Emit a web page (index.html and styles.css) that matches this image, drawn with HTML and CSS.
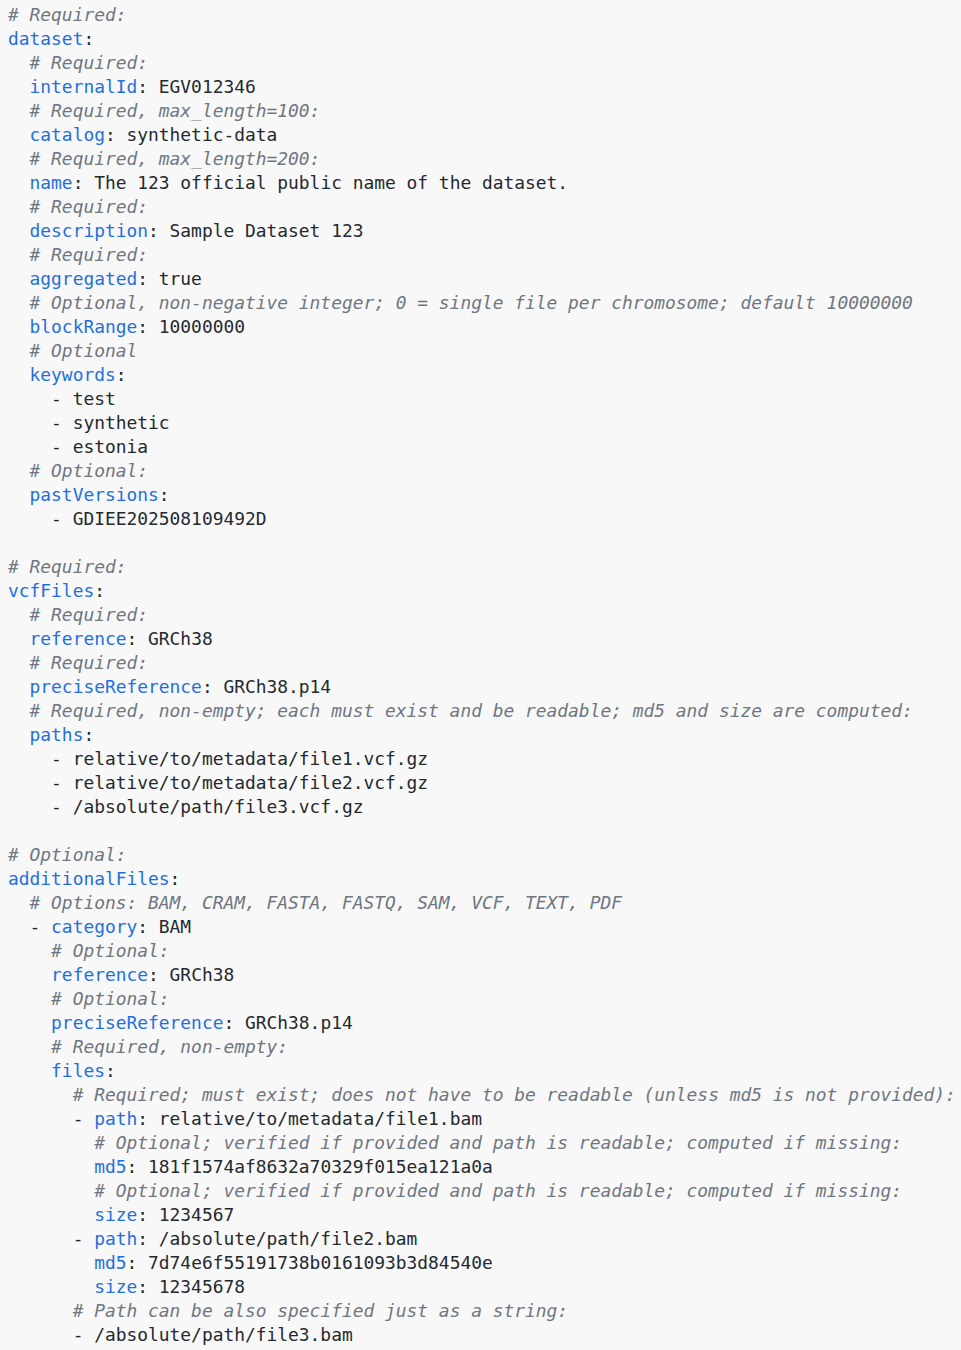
FILE: index.html
```html
<!DOCTYPE html>
<html>
<head>
<meta charset="utf-8">
<link rel="stylesheet" href="styles.css">
</head>
<body>
<pre class="code"><span class="c"># Required:</span>
<span class="k">dataset</span>:
  <span class="c"># Required:</span>
  <span class="k">internalId</span>: EGV012346
  <span class="c"># Required, max_length=100:</span>
  <span class="k">catalog</span>: synthetic-data
  <span class="c"># Required, max_length=200:</span>
  <span class="k">name</span>: The 123 official public name of the dataset.
  <span class="c"># Required:</span>
  <span class="k">description</span>: Sample Dataset 123
  <span class="c"># Required:</span>
  <span class="k">aggregated</span>: true
  <span class="c"># Optional, non-negative integer; 0 = single file per chromosome; default 10000000</span>
  <span class="k">blockRange</span>: 10000000
  <span class="c"># Optional</span>
  <span class="k">keywords</span>:
    - test
    - synthetic
    - estonia
  <span class="c"># Optional:</span>
  <span class="k">pastVersions</span>:
    - GDIEE202508109492D

<span class="c"># Required:</span>
<span class="k">vcfFiles</span>:
  <span class="c"># Required:</span>
  <span class="k">reference</span>: GRCh38
  <span class="c"># Required:</span>
  <span class="k">preciseReference</span>: GRCh38.p14
  <span class="c"># Required, non-empty; each must exist and be readable; md5 and size are computed:</span>
  <span class="k">paths</span>:
    - relative/to/metadata/file1.vcf.gz
    - relative/to/metadata/file2.vcf.gz
    - /absolute/path/file3.vcf.gz

<span class="c"># Optional:</span>
<span class="k">additionalFiles</span>:
  <span class="c"># Options: BAM, CRAM, FASTA, FASTQ, SAM, VCF, TEXT, PDF</span>
  - <span class="k">category</span>: BAM
    <span class="c"># Optional:</span>
    <span class="k">reference</span>: GRCh38
    <span class="c"># Optional:</span>
    <span class="k">preciseReference</span>: GRCh38.p14
    <span class="c"># Required, non-empty:</span>
    <span class="k">files</span>:
      <span class="c"># Required; must exist; does not have to be readable (unless md5 is not provided):</span>
      - <span class="k">path</span>: relative/to/metadata/file1.bam
        <span class="c"># Optional; verified if provided and path is readable; computed if missing:</span>
        <span class="k">md5</span>: 181f1574af8632a70329f015ea121a0a
        <span class="c"># Optional; verified if provided and path is readable; computed if missing:</span>
        <span class="k">size</span>: 1234567
      - <span class="k">path</span>: /absolute/path/file2.bam
        <span class="k">md5</span>: 7d74e6f55191738b0161093b3d84540e
        <span class="k">size</span>: 12345678
      <span class="c"># Path can be also specified just as a string:</span>
      - /absolute/path/file3.bam</pre>
</body>
</html>
```

FILE: styles.css
```css
html, body {
  margin: 0;
  padding: 0;
  background: #f8f8f8;
  overflow: hidden;
}

.code {
  margin: 0;
  padding: 3px 0 0 8px;
  font-family: "DejaVu Sans Mono", "Liberation Mono", monospace;
  font-size: 17.9px;
  line-height: 24px;
  color: #24292f;
  white-space: pre;
}

.k {
  color: #1f6fe0;
}

.c {
  color: #6e7681;
  font-style: italic;
}
```
